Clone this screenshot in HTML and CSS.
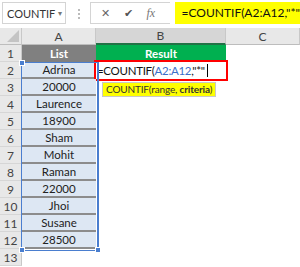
FILE: index.html
```html
<!DOCTYPE html>
<html lang="en">
<head>
    <meta charset="UTF-8">
    <title>COUNTIF</title>
    <link rel="stylesheet" href="styles.css">
</head>
<body>
    <div class="formula-bar">
        <div class="name-box">COUNTIF<span class="drop">&#9662;</span></div>
        <div class="grip"></div>
        <div class="buttons">
            <span class="btn">&#10005;</span>
            <span class="btn check">&#10004;</span>
            <span class="btn fx">fx</span>
        </div>
        <div class="formula-input">=COUNTIF(A2:A12,"*"</div>
    </div>

    <div class="sheet">
        <div class="corner"><div class="tri"></div></div>
        <div class="col-head">A</div>
        <div class="col-head sel">B</div>
        <div class="col-head">C</div>

        <div class="row-head">1</div>
        <div class="cell list-head">List</div>
        <div class="cell result-head">Result</div>
        <div class="cell"></div>

        <div class="row-head">2</div>
        <div class="cell data">Adrina</div>
        <div class="cell edit">=COUNTIF(<span class="ref">A2:A12</span>,"*"<span class="caret"></span></div>
        <div class="cell"></div>

        <div class="row-head">3</div>
        <div class="cell data">20000</div>
        <div class="cell"></div>
        <div class="cell"></div>

        <div class="row-head">4</div>
        <div class="cell data">Laurence</div>
        <div class="cell"></div>
        <div class="cell"></div>

        <div class="row-head">5</div>
        <div class="cell data">18900</div>
        <div class="cell"></div>
        <div class="cell"></div>

        <div class="row-head">6</div>
        <div class="cell data">Sham</div>
        <div class="cell"></div>
        <div class="cell"></div>

        <div class="row-head">7</div>
        <div class="cell data">Mohit</div>
        <div class="cell"></div>
        <div class="cell"></div>

        <div class="row-head">8</div>
        <div class="cell data">Raman</div>
        <div class="cell"></div>
        <div class="cell"></div>

        <div class="row-head">9</div>
        <div class="cell data">22000</div>
        <div class="cell"></div>
        <div class="cell"></div>

        <div class="row-head">10</div>
        <div class="cell data">Jhoi</div>
        <div class="cell"></div>
        <div class="cell"></div>

        <div class="row-head">11</div>
        <div class="cell data">Susane</div>
        <div class="cell"></div>
        <div class="cell"></div>

        <div class="row-head">12</div>
        <div class="cell data">28500</div>
        <div class="cell"></div>
        <div class="cell"></div>

        <div class="row-head">13</div>
        <div class="cell"></div>
        <div class="cell"></div>
        <div class="cell"></div>

        <!-- overlays -->
        <div class="selection">
            <span class="handle h-tl"></span>
            <span class="handle h-bl"></span>
            <span class="handle h-br"></span>
        </div>
        <div class="tip">COUNTIF(range, <b>criteria</b>)</div>
    </div>
</body>
</html>
```

FILE: styles.css
```css
body {
    margin: 0;
    width: 300px;
    height: 267px;
    overflow: hidden;
    background: #fff;
    font-family: "Lato", "Liberation Sans", sans-serif;
}

.formula-bar {
    display: flex;
    align-items: flex-start;
    height: 28px;
    padding-top: 2px;
    box-sizing: border-box;
    background: #fff;
}

.name-box {
    display: flex;
    align-items: center;
    justify-content: space-between;
    width: 71px;
    height: 22px;
    margin-left: 2px;
    padding: 0 3px 0 4px;
    box-sizing: border-box;
    border: 1px solid #d4d4d4;
    font-size: 11px;
    color: #333;
}

.drop {
    font-size: 8px;
    color: #777;
}

.grip {
    width: 2px;
    height: 10px;
    margin: 7px 8px 0 12px;
    border-left: 2px dotted #bbb;
}

.buttons {
    display: flex;
    align-items: center;
    width: 80px;
    height: 22px;
    padding-left: 10px;
    box-sizing: border-box;
    border: 1px solid #d4d4d4;
    border-right: none;
    color: #666;
}

.btn {
    width: 25px;
    font-size: 11px;
}

.check {
    color: #555;
}

.fx {
    font-family: "Liberation Serif", serif;
    font-style: italic;
    font-size: 12px;
    color: #777;
}

.formula-input {
    flex: 1;
    height: 22px;
    margin-left: 5px;
    padding-left: 7px;
    background: #ffff00;
    font-size: 12px;
    line-height: 22px;
    color: #111;
    white-space: nowrap;
}

.sheet {
    position: relative;
    display: grid;
    grid-template-columns: 22px 74px 130px 74px;
    grid-auto-rows: 17px;
    font-size: 12px;
}

.corner {
    position: relative;
    background: #e8e8e8;
    border-right: 1px solid #c8c8c8;
    border-bottom: 1px solid #bdbdbd;
}

.tri {
    position: absolute;
    right: 2px;
    bottom: 2px;
    width: 0;
    height: 0;
    border-left: 12px solid transparent;
    border-bottom: 12px solid #c4c4c4;
}

.col-head {
    display: flex;
    align-items: center;
    justify-content: center;
    background: #e8e8e8;
    border-right: 1px solid #c8c8c8;
    border-bottom: 1px solid #bdbdbd;
    color: #444;
}

.col-head.sel {
    background: #d6d6d6;
    border-bottom: 2px solid #217346;
}

.row-head {
    display: flex;
    align-items: center;
    justify-content: center;
    background: #e8e8e8;
    border-right: 1px solid #c8c8c8;
    border-bottom: 1px solid #d6d6d6;
    color: #444;
}

.cell {
    display: flex;
    align-items: center;
    justify-content: center;
    box-sizing: border-box;
    white-space: nowrap;
    font-size: 11.5px;
}

.list-head {
    background: #808080;
    color: #fff;
    font-weight: bold;
}

.result-head {
    background: #00b050;
    color: #fff;
    font-weight: bold;
}

.data {
    background: #dde7f3;
    border-bottom: 2px solid #8c8c8c;
    color: #222;
}

.edit {
    justify-content: flex-start;
    padding-left: 1px;
    outline: 2px solid #ff0000;
    outline-offset: 0;
    font-size: 11.5px;
    letter-spacing: -0.3px;
    color: #111;
}

.ref {
    color: #3c6fc7;
}

.caret {
    width: 1px;
    height: 13px;
    margin-left: 2px;
    background: #000;
}

.selection {
    position: absolute;
    left: 21px;
    top: 34px;
    width: 75px;
    height: 187px;
    border: 1px solid #4a7ecf;
    border-right-width: 2px;
    pointer-events: none;
}

.handle {
    position: absolute;
    width: 4px;
    height: 4px;
    background: #4a7ecf;
    border: 1px solid #fff;
}

.h-tl { left: -3px; top: -3px; }
.h-bl { left: -3px; bottom: -3px; }
.h-br { right: -4px; bottom: -3px; }

.tip {
    position: absolute;
    left: 102px;
    top: 54px;
    height: 13px;
    padding: 0 3px;
    background: #ffff00;
    border: 1px solid #c8c8c8;
    font-size: 10px;
    letter-spacing: -0.15px;
    line-height: 13px;
    color: #333;
    white-space: nowrap;
}
```
